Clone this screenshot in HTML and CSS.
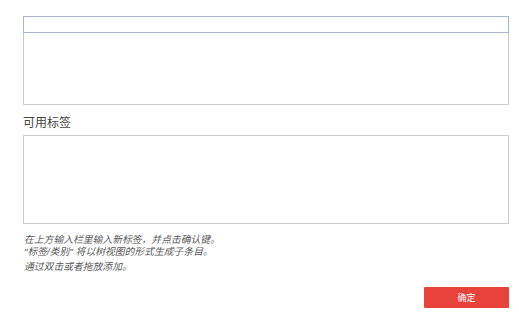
FILE: index.html
```html
<!DOCTYPE html>
<html lang="zh-CN">
<head>
  <meta charset="UTF-8" />
  <title>标签</title>
  <link rel="stylesheet" href="styles.css">
</head>
<body>
  <div class="panel">
    <div class="tag-box">
      <input class="tag-input" type="text" />
    </div>

    <div class="label">可用标签</div>
    <div class="tag-list"></div>

    <div class="hint">
      <p>在上方输入栏里输入新标签，并点击确认键。</p>
      <p class="last">"标签/类别" 将以树视图的形式生成子条目。</p>
      <p>通过双击或者拖放添加。</p>
    </div>

    <div class="actions">
      <button class="ok">确定</button>
    </div>
  </div>
</body>
</html>
```

FILE: styles.css
```css
body {
  margin: 0;
  background: #fff;
  font-family: "Noto Sans CJK SC", "Noto Sans", sans-serif;
  color: #444;
}
.panel {
  width: 486px;
  padding: 16px 0 0 23px;
}
.tag-box {
  height: 87px;
  border: 1px solid #cbcbcb;
  display: flex;
  flex-direction: column;
}
.tag-input {
  margin: -1px -1px 0 -1px;
  height: 17px;
  box-sizing: border-box;
  border: 1px solid #a9b3cd;
  outline: none;
  padding: 0 4px;
  font-size: 11px;
}
.label {
  font-size: 12px;
  line-height: 16px;
  margin: 9px 0 5px;
  color: #444;
}
.tag-list {
  height: 87px;
  border: 1px solid #cbcbcb;
}
.hint {
  margin-top: 10px;
  padding-left: 1px;
  font-family: "Liberation Sans", "Noto Sans CJK SC", sans-serif;
  font-size: 9.8px;
  font-style: italic;
  color: #5a5a5a;
  line-height: 12px;
}
.hint p {
  margin: 0;
}
.hint p.last {
  margin-bottom: 3px;
}
.actions {
  display: flex;
  justify-content: flex-end;
  margin-top: 14px;
}
.ok {
  width: 85px;
  height: 21px;
  border: none;
  border-radius: 1px;
  background: #e8423b;
  color: #fff;
  font-family: inherit;
  font-size: 9px;
  cursor: pointer;
}
```
